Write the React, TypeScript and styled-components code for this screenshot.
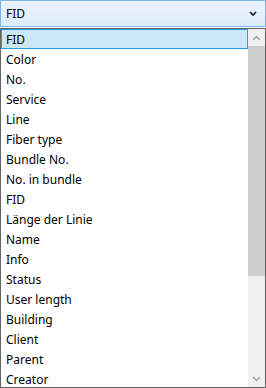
import styled, { createGlobalStyle } from "styled-components";
import { FC } from "react";

const GlobalStyle = createGlobalStyle`
  body {
    margin: 0;
    background: #ffffff;
    font-family: "Noto Sans", "Segoe UI", sans-serif;
    font-size: 12px;
    color: #000000;
  }
`;

const fields = [
  "FID",
  "Color",
  "No.",
  "Service",
  "Line",
  "Fiber type",
  "Bundle No.",
  "No. in bundle",
  "FID",
  "Länge der Linie",
  "Name",
  "Info",
  "Status",
  "User length",
  "Building",
  "Client",
  "Parent",
  "Creator",
];

const Wrapper = styled.div`
  width: 266px;
  height: 388px;
  display: flex;
  flex-direction: column;
  overflow: hidden;
`;

const ComboBox = styled.div`
  height: 27px;
  box-sizing: border-box;
  border: 1px solid #7eb4ea;
  background: linear-gradient(#ecf4fc, #dcecfc);
  display: flex;
  align-items: center;
  justify-content: space-between;
  padding: 0 8px 0 5px;
  flex-shrink: 0;
`;

const DropDown = styled.div`
  margin-top: 1px;
  flex: 1;
  min-height: 0;
  border: 1px solid #646464;
  display: flex;
  overflow: hidden;
`;

const List = styled.div`
  flex: 1;
  display: flex;
  flex-direction: column;
  overflow: hidden;
`;

const Item = styled.div<{ selected?: boolean }>`
  height: 20px;
  flex-shrink: 0;
  box-sizing: border-box;
  display: flex;
  align-items: center;
  padding-left: 4px;
  border: 1px solid ${({ selected }) => (selected ? "#26a0da" : "transparent")};
  background: ${({ selected }) => (selected ? "#cbe8f6" : "transparent")};
  white-space: nowrap;
`;

const ScrollBar = styled.div`
  width: 17px;
  flex-shrink: 0;
  background: #f0f0f0;
  display: flex;
  flex-direction: column;
`;

const ArrowButton = styled.div`
  height: 17px;
  display: flex;
  align-items: center;
  justify-content: center;
  flex-shrink: 0;
`;

const Track = styled.div`
  flex: 1;
  display: flex;
  flex-direction: column;
`;

const Thumb = styled.div`
  height: 230px;
  background: #cdcdcd;
`;

const Chevron: FC<{ up?: boolean; color: string; width?: number }> = ({
  up,
  color,
  width = 2,
}) => (
  <svg width="9" height="6" viewBox="0 0 9 6">
    <path
      d={up ? "M1 5 L4.5 1.5 L8 5" : "M1 1 L4.5 4.5 L8 1"}
      fill="none"
      stroke={color}
      strokeWidth={width}
    />
  </svg>
);

export default function App() {
  return (
    <>
      <GlobalStyle />
      <Wrapper>
        <ComboBox>
          <span>FID</span>
          <svg width="8" height="5" viewBox="0 0 8 5">
            <path d="M1 1 L4 4 L7 1" fill="none" stroke="#1a1a1a" strokeWidth="1.6" />
          </svg>
        </ComboBox>
        <DropDown>
          <List>
            {fields.map((f, i) => (
              <Item key={i} selected={i === 0}>
                {f}
              </Item>
            ))}
          </List>
          <ScrollBar>
            <ArrowButton>
              <Chevron up color="#a3a3a3" width={1.5} />
            </ArrowButton>
            <Track>
              <Thumb />
            </Track>
            <ArrowButton>
              <Chevron color="#a3a3a3" width={1.5} />
            </ArrowButton>
          </ScrollBar>
        </DropDown>
      </Wrapper>
    </>
  );
}
